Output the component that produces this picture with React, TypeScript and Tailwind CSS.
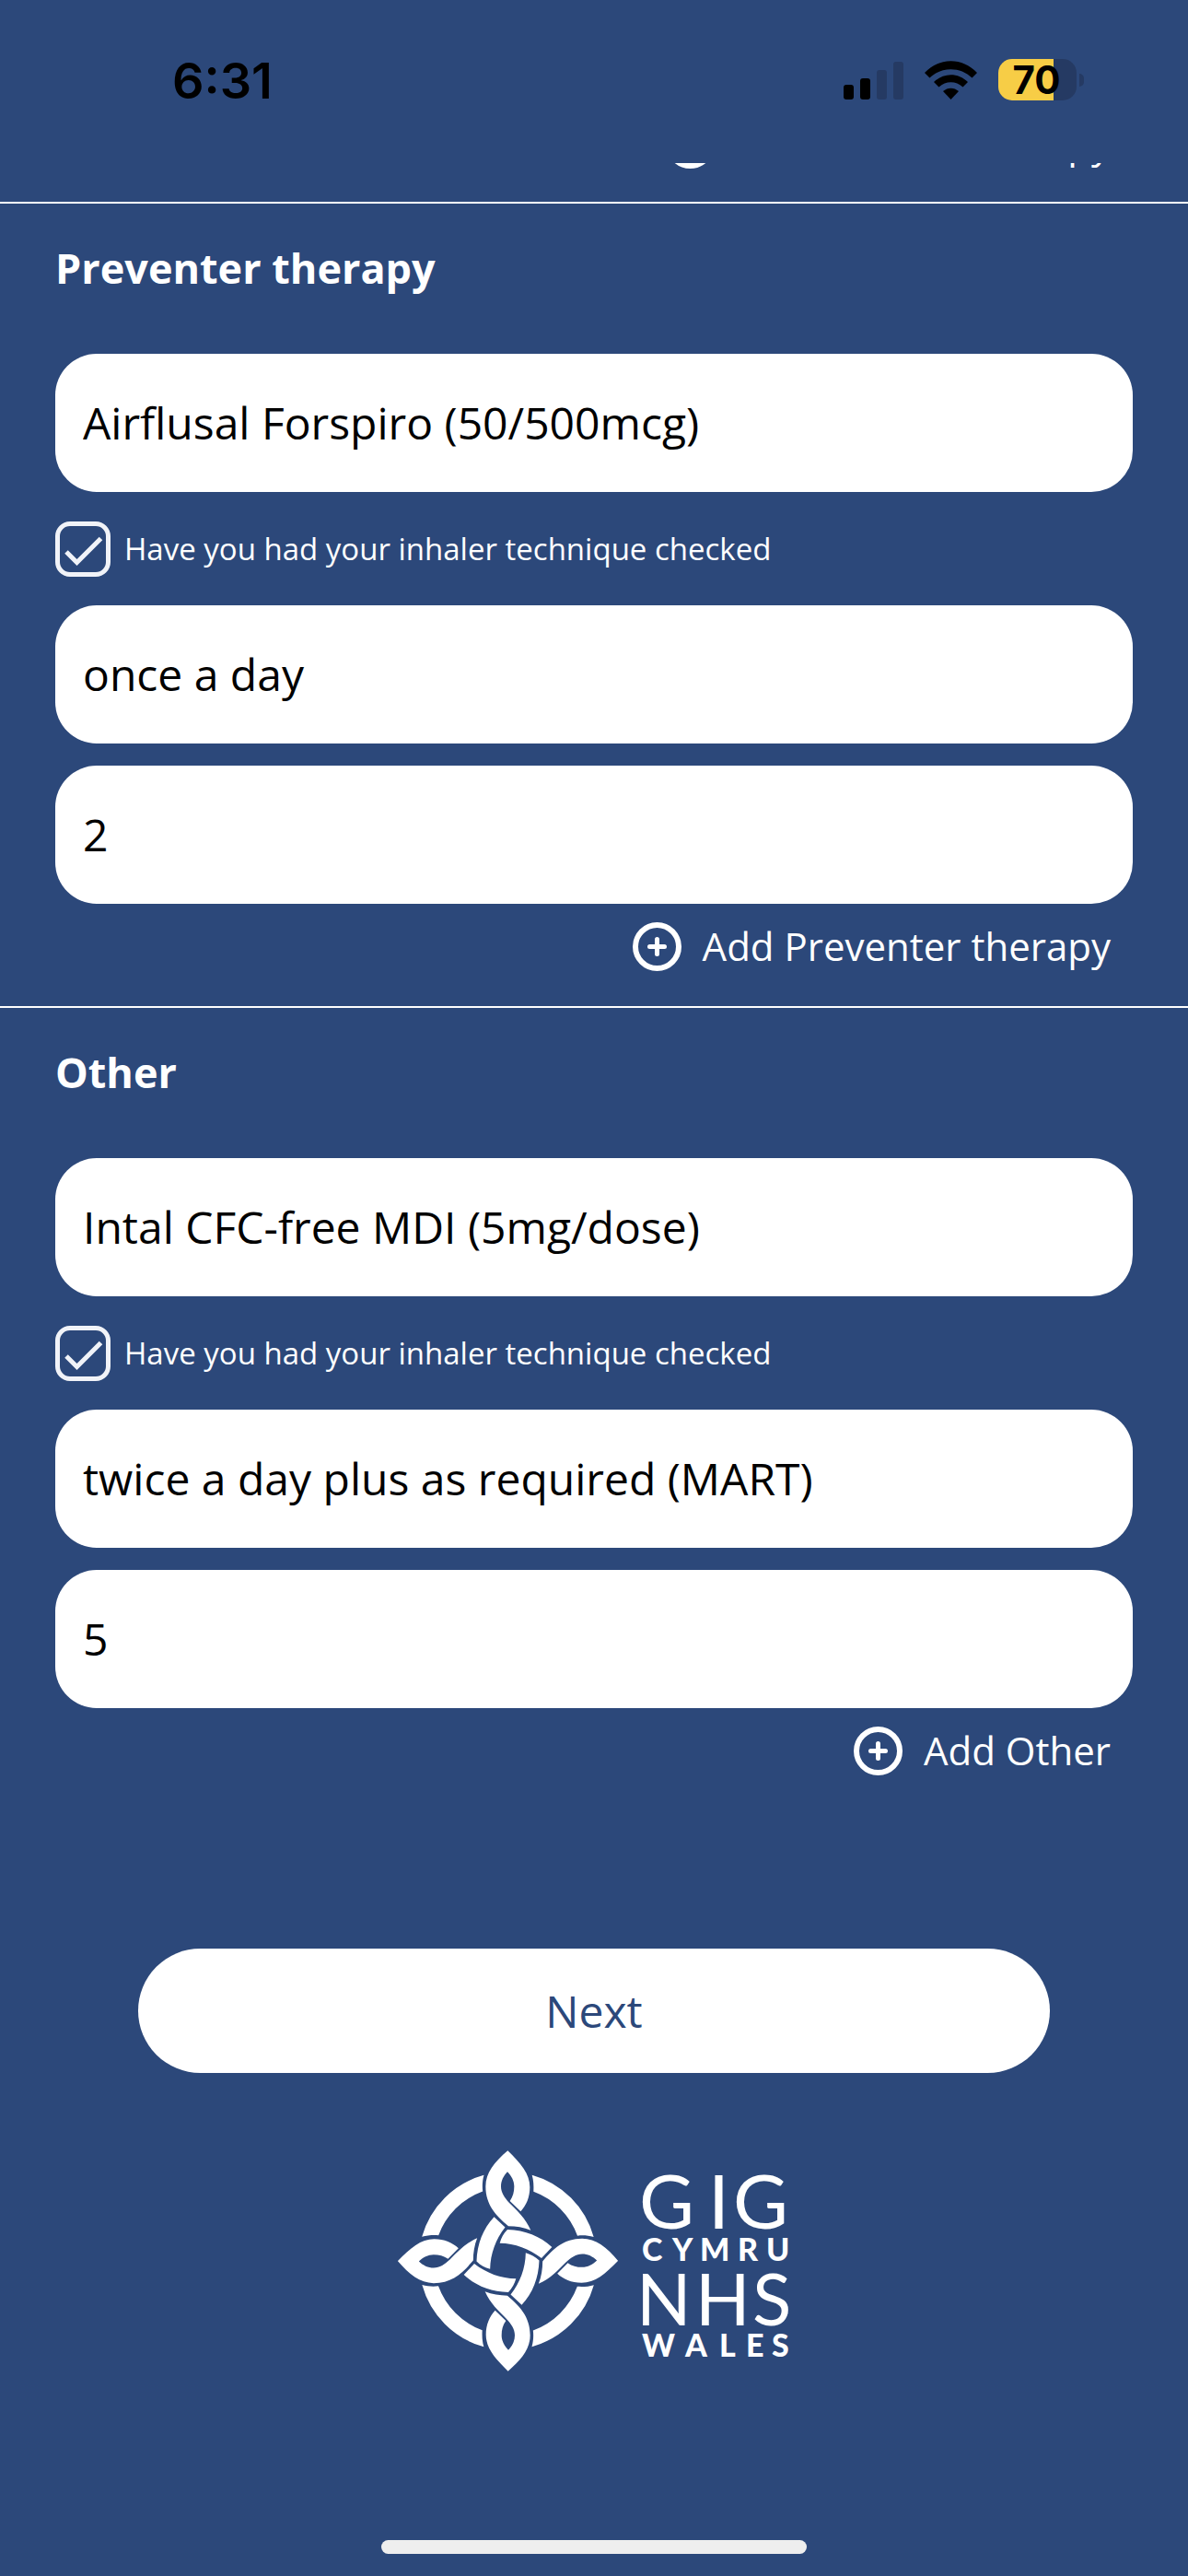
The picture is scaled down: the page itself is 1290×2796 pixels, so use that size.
import { useState } from "react";

function StatusBar() {
  return (
    <header className="flex h-[177px] shrink-0 items-start justify-between pl-[187px] pr-[113px] pt-[56px] font-['Inter',sans-serif] text-black">
      <span className="text-[54px] font-semibold leading-[64px]">6:31</span>
      <div className="flex h-[61px] items-center gap-[23px]">
        <svg width="65" height="42" viewBox="0 0 65 42" aria-hidden="true">
          <rect x="0" y="26" width="11" height="16" rx="3" />
          <rect x="18" y="19" width="11" height="23" rx="3" />
          <rect x="36" y="10" width="11" height="32" rx="3" fill="#253a63" />
          <rect x="54" y="1" width="11" height="41" rx="3" fill="#253a63" />
        </svg>
        <svg width="57" height="42" viewBox="0 0 57 42" aria-hidden="true">
          <path d="M0 13 C16 -4 41 -4 57 13 L51.500 18.500 C39 6 18 6 5.500 18.500 Z" />
          <path d="M10 23 C20.500 12.500 36.500 12.500 47 23 L41.500 28.500 C34 21.500 23 21.500 15.500 28.500 Z" />
          <path d="M20 33 C25 28.500 32 28.500 37 33 L28.500 42 Z" />
        </svg>
        <div className="flex items-center gap-[3px]">
          <div className="flex h-[45px] w-[85px] items-center justify-center rounded-[15px] bg-linear-to-r from-[#f7cd46] from-71% to-[#253a63] to-71% text-[42px] font-bold leading-[45px]">
            <span className="pr-[2px]">70</span>
          </div>
          <div className="h-[14px] w-[5px] rounded-r-[5px] bg-[#253a63]" />
        </div>
      </div>
    </header>
  );
}

function AddButton({ label }: { label: string }) {
  return (
    <button type="button" className="flex items-center gap-[23px] text-[42px] leading-[60px] text-white">
      <svg width="53" height="53" viewBox="0 0 53 53" fill="none" stroke="#fff" strokeLinecap="round" aria-hidden="true">
        <circle cx="26.500" cy="26.500" r="23.500" strokeWidth="6" />
        <path d="M26.500 18.500V34.500M18.500 26.500H34.500" strokeWidth="5" />
      </svg>
      {label}
    </button>
  );
}

function Field({ name, initial }: { name: string; initial: string }) {
  return (
    <input
      type="text"
      aria-label={name}
      defaultValue={initial}
      className="h-[150px] w-full rounded-[45px] bg-white px-[30px] pb-[2px] text-[48px] text-black outline-none"
    />
  );
}

function TechniqueCheck() {
  const [checked, setChecked] = useState(true);
  return (
    <label className="my-[31px] flex h-[61px] items-center gap-[15px] text-[33px] leading-[60px] text-white">
      <span className="grid size-[60px] place-items-center">
        <input
          type="checkbox"
          checked={checked}
          onChange={(e) => setChecked(e.target.checked)}
          className="col-start-1 row-start-1 size-[60px] appearance-none rounded-[16px] border-5 border-[#f1f3f8]"
        />
        {checked && (
          <svg className="pointer-events-none col-start-1 row-start-1" width="60" height="60" viewBox="0 0 60 60" fill="none" stroke="#f1f3f8" strokeWidth="5" aria-hidden="true">
            <path d="M12 33L23.500 44.500L49.500 18.500" />
          </svg>
        )}
      </span>
      Have you had your inhaler technique checked
    </label>
  );
}

type Therapy = { title: string; medicine: string; frequency: string; doses: string };

function TherapySection({ title, medicine, frequency, doses }: Therapy) {
  return (
    <section className="border-t-2 border-white px-[60px] pb-[35px] pt-[40px]">
      <h2 className="mb-[63px] text-[45px] font-bold leading-[60px] text-white">{title}</h2>
      <Field name={`${title} medicine`} initial={medicine} />
      <TechniqueCheck />
      <div className="flex flex-col gap-[24px]">
        <Field name={`${title} frequency`} initial={frequency} />
        <Field name={`${title} doses`} initial={doses} />
      </div>
      <div className="flex justify-end pr-[24px] pt-[16px]">
        <AddButton label={`Add ${title}`} />
      </div>
    </section>
  );
}

const quarterTurns = [0, 90, 180, 270];

function Logo() {
  return (
    <div className="flex items-center justify-center gap-[20px]">
      <svg width="239" height="240" viewBox="40 42 717 720" fill="#fff" aria-hidden="true">
        {quarterTurns.map((angle) => (
          <g key={angle} transform={`rotate(${angle} 398.5 402)`}>
            <path d="M398 43C440 84 470 118 470 162C470 195 458 222 440 241L405 207C415 193 419 178 419 160C419 142 410 125 397 112C384 125 376 142 376 160C376 180 388 197 403 213C430 240 455 262 473 302C450 293 425 289 400 289C360 255 326 220 326 160C326 115 355 80 398 43Z" />
            <path d="M397 300C455 302 503 321 542 357L508 393C468 362 422 345 372 344C377 327 384 313 397 300Z" />
            <path d="M477 122A290 290 0 0 1 678 324C660 319 642 318 625 320A241 241 0 0 0 482 176C483 156 482 139 477 122Z" />
          </g>
        ))}
      </svg>
      <svg width="168" height="240" viewBox="22 4 168 240" fill="#fff" className="overflow-visible font-['Lato',sans-serif]" role="img" aria-label="GIG Cymru NHS Wales">
        <text x="25 100 127" y="89" fontSize="82">GIG</text>
        <text x="28 61 91 132 163" y="124" fontSize="34" fontWeight="900">CYMRU</text>
        <text x="22 86 148" y="194" fontSize="78">NHS</text>
        <text x="28 75 112 141 169" y="228" fontSize="34" fontWeight="900">WALES</text>
      </svg>
    </div>
  );
}

export default function App() {
  return (
    <div className="flex min-h-screen flex-col bg-[#2c487a] font-['Open_Sans',sans-serif]">
      <StatusBar />
      <main className="flex flex-1 flex-col">
        <div className="flex h-[42px] items-end justify-end overflow-hidden pb-[33px] pr-[84px]">
          <AddButton label="Add Reliever therapy" />
        </div>
        <TherapySection title="Preventer therapy" medicine="Airflusal Forspiro (50/500mcg)" frequency="once a day" doses="2" />
        <TherapySection title="Other" medicine="Intal CFC-free MDI (5mg/dose)" frequency="twice a day plus as required (MART)" doses="5" />
        <div className="px-[150px] pb-[84px] pt-[150px]">
          <button type="button" className="h-[135px] w-full rounded-full bg-white text-[48px] text-[#2c487a]">
            Next
          </button>
        </div>
        <Logo />
      </main>
      <div className="mx-auto mb-[24px] h-[15px] w-[462px] rounded-full bg-[#eeeeee]" />
    </div>
  );
}
